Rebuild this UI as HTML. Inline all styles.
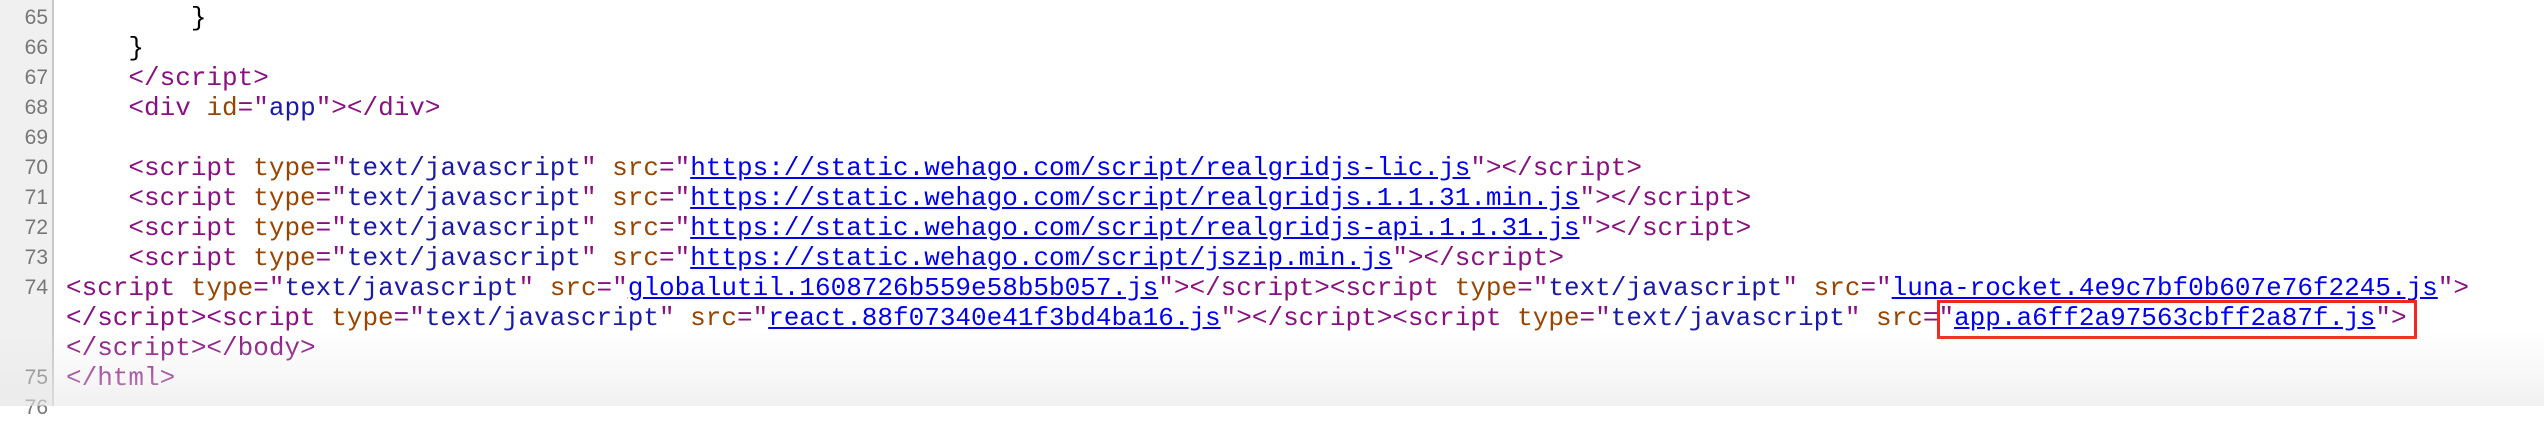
<!DOCTYPE html>
<html><head><meta charset="utf-8"><style>
html,body{margin:0;padding:0;width:2544px;height:406px;overflow:hidden;background:#fff;}
.g{position:absolute;left:0;top:0;width:52px;height:406px;background:#f0f0f0;border-right:2px solid #c8c8c8;}
.n{position:absolute;left:0;width:48px;text-align:right;font-family:"Liberation Sans",sans-serif;font-size:21px;color:#777;line-height:30px;}
.r{position:absolute;left:66px;font-family:"Liberation Mono",monospace;font-size:26px;letter-spacing:0;line-height:30px;white-space:pre;color:#000;}
.t{color:#881280}.a{color:#994500}.v{color:#1a1aa6}.l{color:#0000ee;text-decoration:underline;}
.box{position:absolute;left:1937px;top:300px;width:474px;height:33px;border:3px solid #f3261f;}
.fade{position:absolute;left:0;top:330px;width:2544px;height:76px;background:linear-gradient(to bottom,rgba(235,235,235,0),rgba(232,232,232,0.6));pointer-events:none;}
</style></head><body>
<div class="g"></div>
<div class="n" style="top:3px">65</div>
<div class="n" style="top:33px">66</div>
<div class="n" style="top:63px">67</div>
<div class="n" style="top:93px">68</div>
<div class="n" style="top:123px">69</div>
<div class="n" style="top:153px">70</div>
<div class="n" style="top:183px">71</div>
<div class="n" style="top:213px">72</div>
<div class="n" style="top:243px">73</div>
<div class="n" style="top:273px">74</div>
<div class="n" style="top:363px">75</div>
<div class="n" style="top:393px">76</div>

<div class="r" style="top:3px">        }</div>
<div class="r" style="top:33px">    }</div>
<div class="r" style="top:63px">    <span class="t">&lt;/script&gt;</span></div>
<div class="r" style="top:93px">    <span class="t">&lt;div </span><span class="a">id</span><span class="t">="</span><span class="v">app</span><span class="t">"&gt;&lt;/div&gt;</span></div>
<div class="r" style="top:153px">    <span class="t">&lt;script </span><span class="a">type</span><span class="t">="</span><span class="v">text/javascript</span><span class="t">" </span><span class="a">src</span><span class="t">="</span><span class="l">https://static.wehago.com/script/realgridjs-lic.js</span><span class="t">"&gt;&lt;/script&gt;</span></div>
<div class="r" style="top:183px">    <span class="t">&lt;script </span><span class="a">type</span><span class="t">="</span><span class="v">text/javascript</span><span class="t">" </span><span class="a">src</span><span class="t">="</span><span class="l">https://static.wehago.com/script/realgridjs.1.1.31.min.js</span><span class="t">"&gt;&lt;/script&gt;</span></div>
<div class="r" style="top:213px">    <span class="t">&lt;script </span><span class="a">type</span><span class="t">="</span><span class="v">text/javascript</span><span class="t">" </span><span class="a">src</span><span class="t">="</span><span class="l">https://static.wehago.com/script/realgridjs-api.1.1.31.js</span><span class="t">"&gt;&lt;/script&gt;</span></div>
<div class="r" style="top:243px">    <span class="t">&lt;script </span><span class="a">type</span><span class="t">="</span><span class="v">text/javascript</span><span class="t">" </span><span class="a">src</span><span class="t">="</span><span class="l">https://static.wehago.com/script/jszip.min.js</span><span class="t">"&gt;&lt;/script&gt;</span></div>
<div class="r" style="top:273px"><span class="t">&lt;script </span><span class="a">type</span><span class="t">="</span><span class="v">text/javascript</span><span class="t">" </span><span class="a">src</span><span class="t">="</span><span class="l">globalutil.1608726b559e58b5b057.js</span><span class="t">"&gt;&lt;/script&gt;&lt;script </span><span class="a">type</span><span class="t">="</span><span class="v">text/javascript</span><span class="t">" </span><span class="a">src</span><span class="t">="</span><span class="l">luna-rocket.4e9c7bf0b607e76f2245.js</span><span class="t">"&gt;</span></div>
<div class="r" style="top:303px"><span class="t">&lt;/script&gt;&lt;script </span><span class="a">type</span><span class="t">="</span><span class="v">text/javascript</span><span class="t">" </span><span class="a">src</span><span class="t">="</span><span class="l">react.88f07340e41f3bd4ba16.js</span><span class="t">"&gt;&lt;/script&gt;&lt;script </span><span class="a">type</span><span class="t">="</span><span class="v">text/javascript</span><span class="t">" </span><span class="a">src</span><span class="t">="</span><span class="l">app.a6ff2a97563cbff2a87f.js</span><span class="t">"&gt;</span></div>
<div class="r" style="top:333px"><span class="t">&lt;/script&gt;&lt;/body&gt;</span></div>
<div class="r" style="top:363px"><span class="t">&lt;/html&gt;</span></div>
<div class="box"></div>
<div class="fade"></div>
</body></html>
